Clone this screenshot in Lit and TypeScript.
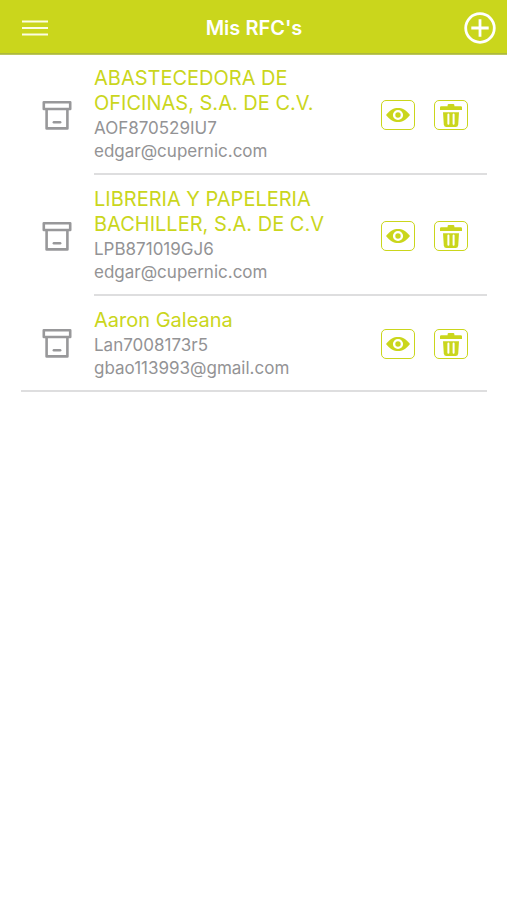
import { LitElement, html, css, svg } from "lit";
import { customElement, property } from "lit/decorators.js";

interface Rfc {
  name: string;
  code: string;
  email: string;
}

const RFCS: Rfc[] = [
  { name: "ABASTECEDORA DE OFICINAS, S.A. DE C.V.", code: "AOF870529IU7", email: "edgar@cupernic.com" },
  { name: "LIBRERIA Y PAPELERIA BACHILLER, S.A. DE C.V", code: "LPB871019GJ6", email: "edgar@cupernic.com" },
  { name: "Aaron Galeana", code: "Lan7008173r5", email: "gbao113993@gmail.com" },
];

const menuIcon = svg`<svg width="26" height="18" viewBox="0 0 26 18" aria-hidden="true">
  <path d="M0 2.5H26M0 9H26M0 15.5H26" stroke="#fcfde4" stroke-width="2.2"/></svg>`;

const addIcon = svg`<svg width="32" height="32" viewBox="0 0 32 32" fill="none" stroke="#fff" aria-hidden="true">
  <circle cx="16" cy="16" r="14.3" stroke-width="2.8"/>
  <path d="M16 7.3V24.7M7.3 16H24.7" stroke-width="2.8"/></svg>`;

const archiveIcon = svg`<svg width="30" height="30" viewBox="0 0 30 30" fill="none" stroke="#98989a" stroke-width="2.6" aria-hidden="true">
  <path d="M1.8 2.3H28.2V9H1.8Z" stroke-linejoin="round"/>
  <path d="M4.6 9V28.4H25.4V9" stroke-linejoin="round"/>
  <path d="M11.8 22.3H18.2" stroke-width="2.4" stroke-linecap="round"/></svg>`;

const eyeIcon = svg`<svg width="26" height="16" viewBox="0 0 26 16" aria-hidden="true">
  <path d="M1 8C5 2.6 8.8 1 13 1S21 2.6 25 8C21 13.4 17.2 15 13 15S5 13.4 1 8Z" fill="#cad61c"/>
  <circle cx="13" cy="8" r="3.9" fill="#cad61c" stroke="#fff" stroke-width="2.4"/>
  <circle cx="13" cy="8" r="1.6" fill="#cad61c"/></svg>`;

const trashIcon = svg`<svg width="24" height="26" viewBox="0 0 24 26" aria-hidden="true">
  <path d="M2.2 4.2H8.6V3.2Q8.6 2 9.8 2H14.2Q15.4 2 15.4 3.2V4.2H21.8Q23 4.2 23 5.4V8H1V5.4Q1 4.2 2.2 4.2Z" fill="#cad61c"/>
  <path d="M4 10.2H20L19.2 22.4Q19 25 16.6 25H7.4Q5 25 4.8 22.4Z" fill="#cad61c"/>
  <path d="M9.4 12.6V21.8M14.6 12.6V21.8" stroke="#fff" stroke-width="2" stroke-linecap="round"/></svg>`;

@customElement("rfc-item")
export class RfcItem extends LitElement {
  @property({ attribute: false }) rfc!: Rfc;

  static styles = css`
    :host {
      display: flex;
      margin: 0 20px 0 21px;
    }
    :host([last]) {
      border-bottom: 2px solid #dededf;
    }
    .lead {
      flex: none;
      width: 72px;
      margin-right: 1px;
      display: flex;
      align-items: center;
      justify-content: center;
    }
    .row {
      flex: 1;
      min-width: 0;
      display: flex;
      align-items: center;
      gap: 19px;
      padding: 12px 19px 10px 0;
      border-bottom: 2px solid #dededf;
    }
    :host([last]) .row {
      border-bottom: 0;
    }
    .text {
      flex: 1;
      min-width: 0;
    }
    .name {
      margin: 0 0 1px;
      font-size: 20px;
      line-height: 25px;
      font-weight: 400;
      color: #cad61c;
    }
    .detail {
      margin: 0;
      font-size: 17px;
      line-height: 23px;
      color: #939395;
    }
    .action {
      flex: none;
      box-sizing: border-box;
      width: 34px;
      height: 30px;
      padding: 0;
      display: flex;
      align-items: center;
      justify-content: center;
      background: #fff;
      border: 1px solid #cad61c;
      border-radius: 5px;
      cursor: pointer;
    }
    svg {
      display: block;
    }
  `;

  render() {
    return html`
      <div class="lead">${archiveIcon}</div>
      <div class="row">
        <div class="text">
          <h2 class="name">${this.rfc.name}</h2>
          <p class="detail">${this.rfc.code}</p>
          <p class="detail">${this.rfc.email}</p>
        </div>
        <button class="action" type="button" aria-label="Ver">${eyeIcon}</button>
        <button class="action" type="button" aria-label="Eliminar">${trashIcon}</button>
      </div>
    `;
  }
}

@customElement("app-root")
export class AppRoot extends LitElement {
  static styles = css`
    :host {
      display: block;
      min-height: 100vh;
      background: #fff;
      font-family: Inter, "Liberation Sans", sans-serif;
    }
    .bar {
      display: grid;
      grid-template-columns: 1fr auto 1fr;
      align-items: center;
      box-sizing: border-box;
      height: 54px;
      padding: 3px 11px 0 22px;
      background: #cad61c;
      border-bottom: 1px solid #adb93c;
      box-shadow: 0 1px 0 #bcc65c;
    }
    .title {
      margin: 0;
      padding-right: 10px;
      font-size: 20px;
      line-height: 26px;
      font-weight: 600;
      color: #fff;
    }
    .tool {
      padding: 0;
      border: 0;
      background: none;
      cursor: pointer;
    }
    .add {
      justify-self: end;
    }
    .menu {
      justify-self: start;
    }
    .list {
      margin: 0;
      padding: 0;
      list-style: none;
    }
    svg {
      display: block;
    }
  `;

  render() {
    return html`
      <header class="bar">
        <button class="tool menu" type="button" aria-label="Menú">${menuIcon}</button>
        <h1 class="title">Mis RFC's</h1>
        <button class="tool add" type="button" aria-label="Agregar">${addIcon}</button>
      </header>
      <main>
        <ul class="list">
          ${RFCS.map(
            (rfc, i) => html`<li><rfc-item .rfc=${rfc} ?last=${i === RFCS.length - 1}></rfc-item></li>`
          )}
        </ul>
      </main>
    `;
  }
}
